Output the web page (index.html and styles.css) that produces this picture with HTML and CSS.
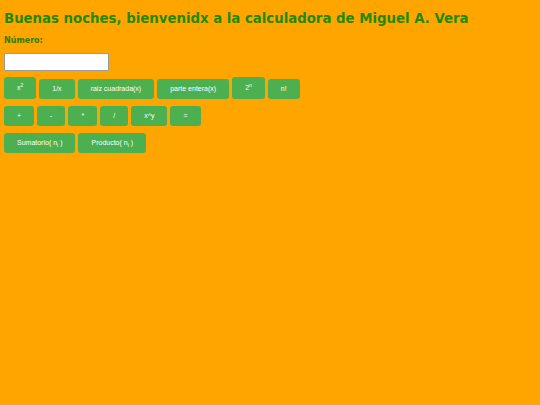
FILE: index.html
```html
<!DOCTYPE html>
<html lang="es">
<head>
<meta charset="utf-8">
<title>Calculadora</title>
<link rel="stylesheet" href="styles.css">
</head>
<body>
<h1 class="title">Buenas noches, bienvenidx a la calculadora de Miguel A. Vera</h1>
<label class="label" for="num">Número:</label>
<input class="field" id="num" type="text">
<div class="row row-1">
  <button class="btn">x<sup>2</sup></button>
  <button class="btn">1/x</button>
  <button class="btn">raiz cuadrada(x)</button>
  <button class="btn">parte entera(x)</button>
  <button class="btn">2<sup>n</sup></button>
  <button class="btn">n!</button>
</div>
<div class="row">
  <button class="btn">+</button>
  <button class="btn">-</button>
  <button class="btn">*</button>
  <button class="btn">/</button>
  <button class="btn">x^y</button>
  <button class="btn">=</button>
</div>
<div class="row">
  <button class="btn">Sumatorio( n<sub>i</sub> )</button>
  <button class="btn">Producto( n<sub>i</sub> )</button>
</div>
</body>
</html>
```
FILE: styles.css
```css
html, body {
  background: #ffa500;
}
body {
  margin: 4px;
  font-family: "DejaVu Sans", Verdana, sans-serif;
}
.title {
  margin: 5px 0 0;
  font-size: 13.3px;
  line-height: 19px;
  font-weight: bold;
  color: #1f8a00;
}
.label {
  display: block;
  margin-top: 8px;
  font-size: 8px;
  line-height: 10px;
  font-weight: bold;
  color: #2f7d00;
}
.field {
  display: block;
  box-sizing: border-box;
  margin: 7px 0 0;
  width: 105px;
  height: 18px;
  border: 1px solid #9a9a9a;
  border-radius: 1px;
  background: #fff;
  padding: 0;
}
.row {
  display: flex;
  align-items: flex-end;
  gap: 3px;
  margin-top: 7px;
}
.row-1 {
  margin-top: 6px;
}
.btn {
  font-family: "Liberation Sans", Arial, sans-serif;
  font-size: 7px;
  color: #fff;
  background: #4caf50;
  border: none;
  border-radius: 3px;
  height: 20px;
  padding: 0 13px;
  margin: 0;
  line-height: 20px;
}
.btn sup, .btn sub {
  font-size: 5px;
  line-height: 0;
}
.row-1 .btn:nth-child(1),
.row-1 .btn:nth-child(5) {
  height: 22px;
}
```
